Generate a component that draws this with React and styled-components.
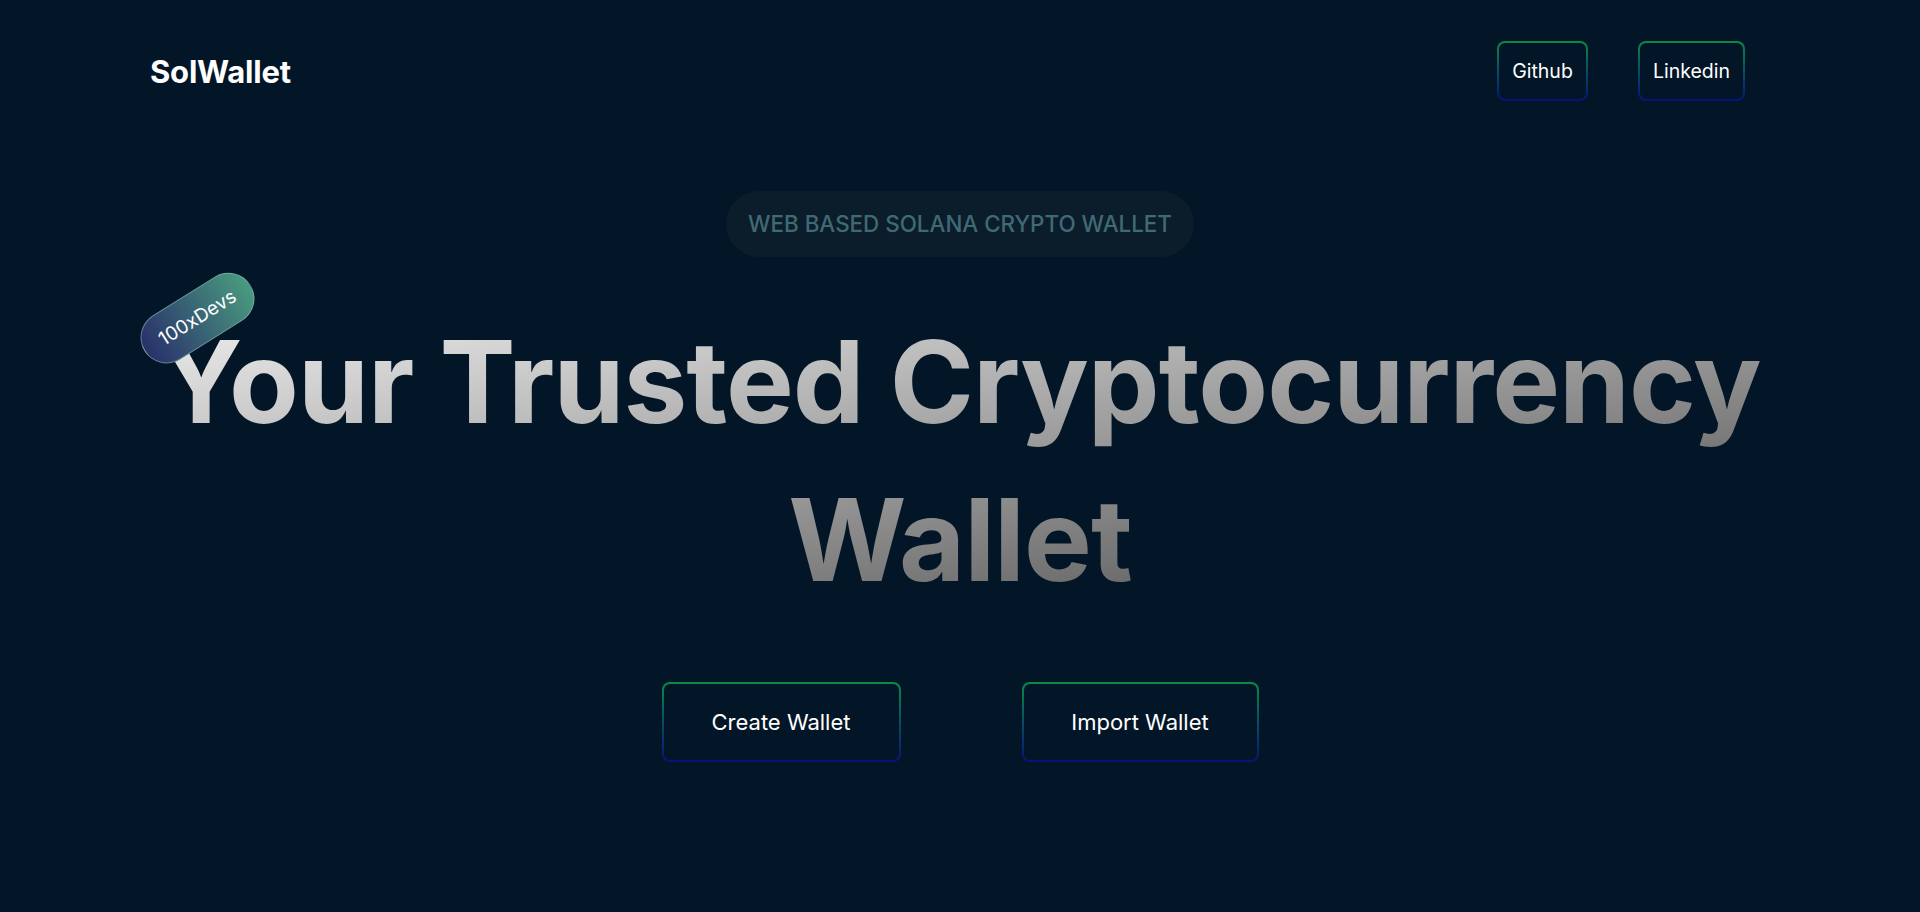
import React from "react";
import styled, { createGlobalStyle } from "styled-components";

const GlobalStyle = createGlobalStyle`
  html, body {
    margin: 0;
    padding: 0;
    background: #031627;
    font-family: Inter, "Noto Sans", sans-serif;
    color: #ffffff;
  }
`;

const Page = styled.div`
  min-height: 912px;
  background: #031627;
  display: flex;
  flex-direction: column;
`;

const Nav = styled.nav`
  display: flex;
  justify-content: space-between;
  align-items: center;
  padding: 41px 175px 0 150px;
`;

const Logo = styled.div`
  font-size: 31px;
  font-weight: 700;
  letter-spacing: -0.2px;
`;

const NavLinks = styled.div`
  display: flex;
  gap: 50px;
`;

const GradientButton = styled.button`
  font-family: Inter, "Noto Sans", sans-serif;
  color: #ffffff;
  font-size: ${(p) => (p.$big ? "22px" : "19.5px")};
  line-height: 28px;
  padding: ${(p) => (p.$big ? "24px 0" : "14px 0")};
  width: ${(p) => p.$width}px;
  border: 2px solid transparent;
  border-radius: 8px;
  background:
    linear-gradient(#031627, #031627) padding-box,
    linear-gradient(to bottom, #0a8a44, #06127a) border-box;
  cursor: pointer;
`;

const Hero = styled.main`
  display: flex;
  flex-direction: column;
  align-items: center;
  padding-top: 90px;
`;

const Tagline = styled.div`
  font-size: 22.4px;
  font-weight: 500;
  line-height: 66px;
  padding: 0 22px;
  border-radius: 33px;
  background: #0b1c2b;
  color: #3f6a74;
`;

const HeadingWrap = styled.div`
  position: relative;
  align-self: stretch;
  margin-top: 46px;
`;

const Heading = styled.h1`
  margin: 0;
  font-size: 114px;
  line-height: 158px;
  font-weight: 700;
  text-align: center;
  letter-spacing: -1px;
  background: linear-gradient(to bottom right, #fafafa, #3a3a3a);
  -webkit-background-clip: text;
  background-clip: text;
  color: transparent;
`;

const DevTag = styled.div`
  position: absolute;
  left: 135px;
  top: -11px;
  transform: rotate(-32deg);
  font-size: 19px;
  line-height: 50px;
  padding: 0 18px;
  border-radius: 26px;
  border: 1px solid rgba(150, 200, 190, 0.5);
  background: linear-gradient(to right, #29306b, #4a9a7f);
  color: #ffffff;
`;

const Actions = styled.div`
  display: flex;
  gap: 121px;
  margin-top: 63px;
`;

export default function App() {
  return (
    <Page>
      <GlobalStyle />
      <Nav>
        <Logo>SolWallet</Logo>
        <NavLinks>
          <GradientButton $width={91}>Github</GradientButton>
          <GradientButton $width={107}>Linkedin</GradientButton>
        </NavLinks>
      </Nav>
      <Hero>
        <Tagline>WEB BASED SOLANA CRYPTO WALLET</Tagline>
        <HeadingWrap>
          <DevTag>100xDevs</DevTag>
          <Heading>
            Your Trusted Cryptocurrency
            <br />
            Wallet
          </Heading>
        </HeadingWrap>
        <Actions>
          <GradientButton $big $width={239}>Create Wallet</GradientButton>
          <GradientButton $big $width={237}>Import Wallet</GradientButton>
        </Actions>
      </Hero>
    </Page>
  );
}
